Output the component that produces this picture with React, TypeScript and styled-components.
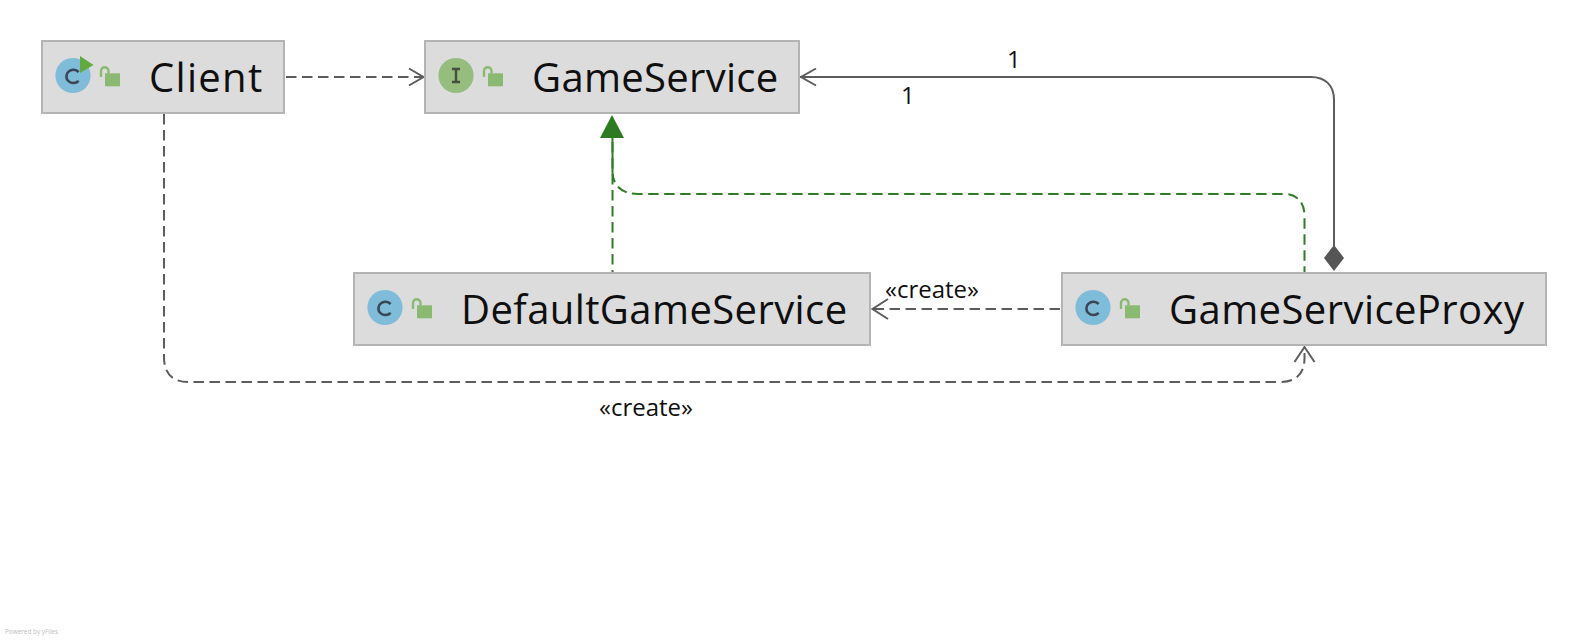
import React from 'react';
import styled, { createGlobalStyle } from 'styled-components';

const GlobalStyle = createGlobalStyle`
  html, body {
    margin: 0;
    padding: 0;
    background: #ffffff;
  }
`;

type Kind = 'class' | 'interface' | 'main';

interface INode {
  name: string;
  kind: Kind;
  x: number;
  y: number;
  w: number;
  track: number;
}

const nodes: INode[] = [
  { name: 'Client', kind: 'main', x: 41, y: 40, w: 244, track: 1.3 },
  { name: 'GameService', kind: 'interface', x: 424, y: 40, w: 376, track: 0.3 },
  { name: 'DefaultGameService', kind: 'class', x: 353, y: 272, w: 518, track: 0.4 },
  { name: 'GameServiceProxy', kind: 'class', x: 1061, y: 272, w: 486, track: 0.42 },
];

const labels = [
  { text: '1', x: 1007, y: 44 },
  { text: '1', x: 901, y: 80 },
  { text: '«create»', x: 885, y: 274 },
  { text: '«create»', x: 599, y: 392 },
];

const NodeIcon = ({ kind }: { kind: Kind }) => (
  <IconSvg width="66" height="40" viewBox="0 0 66 40">
    <circle cx="18" cy="18.5" r="17.6" fill={kind === 'interface' ? '#95bd7e' : '#7fbcd9'} />
    {kind === 'interface' ? (
      <path
        d="M14 12h8M14 25h8M18 12v13"
        fill="none"
        stroke="#45503f"
        strokeWidth="2.4"
      />
    ) : (
      <path
        d="M23.6 15a7 6.6 0 1 0 0 8.8"
        fill="none"
        stroke="#3a4654"
        strokeWidth="2.6"
      />
    )}
    {kind === 'main' && <path d="M25 -1L38.5 8L25 16Z" fill="#62a93f" />}
    <path
      d="M46 20v-6a3.75 3.75 0 0 1 7.5 0v2.5"
      fill="none"
      stroke="#8aba72"
      strokeWidth="2.4"
    />
    <rect x="50" y="16.3" width="15" height="13" fill="#8aba72" />
  </IconSvg>
);

const Edges = () => (
  <EdgeSvg width="1588" height="640" viewBox="0 0 1588 640">
    <g fill="none" stroke="#5c5c5c" strokeWidth="2">
      <path d="M286 77H423" strokeDasharray="10.5 5.5" />
      <path d="M409 68.5L423.5 77L409 85.5" />
      <path d="M800 77H1311C1325 77 1334 85 1334 100V246" />
      <path d="M816 68.5L801 77L816 85.5" />
      <path d="M1060 309H873" strokeDasharray="10.5 5.5" />
      <path d="M888 299L872.5 309L888 319" />
      <path
        d="M164 114V357C164 373 172 382 188 382H1280C1296 382 1304.5 374 1304.5 358V348"
        strokeDasharray="10.5 5.5"
      />
      <path d="M1294.5 362L1304.5 347L1314.5 362" />
    </g>
    <path d="M1334 245L1344 258L1334 271L1324 258Z" fill="#555555" />
    <g fill="none" stroke="#2f7d24" strokeWidth="2">
      <path d="M612.5 138V272" strokeDasharray="10.5 5.5" strokeDashoffset="12" />
      <path d="M612.5 138V172" />
      <path
        d="M612.5 172C613 186 622 194 638 194H1284C1297 194 1304.5 202 1304.5 216V272"
        strokeDasharray="10.5 5.5"
      />
    </g>
    <path d="M612 115L624 138H600Z" fill="#2d7a20" />
  </EdgeSvg>
);

const App = () => (
  <Stage>
    <GlobalStyle />
    <Edges />
    {nodes.map((n) => (
      <ClassNode key={n.name} $x={n.x} $y={n.y} $w={n.w}>
        <NodeIcon kind={n.kind} />
        <NodeName $track={n.track}>{n.name}</NodeName>
      </ClassNode>
    ))}
    {labels.map((l) => (
      <EdgeLabel key={`${l.text}-${l.x}`} $x={l.x} $y={l.y}>
        {l.text}
      </EdgeLabel>
    ))}
    <Watermark>Powered by yFiles</Watermark>
  </Stage>
);

const Stage = styled.div`
  position: relative;
  width: 1588px;
  height: 640px;
  overflow: hidden;
  background: #ffffff;
  font-family: 'Open Sans', 'Noto Sans', 'Liberation Sans', sans-serif;
`;

const EdgeSvg = styled.svg`
  position: absolute;
  top: 0;
  left: 0;
`;

const ClassNode = styled.div<{ $x: number; $y: number; $w: number }>`
  position: absolute;
  left: ${(p) => p.$x}px;
  top: ${(p) => p.$y}px;
  width: ${(p) => p.$w}px;
  height: 74px;
  box-sizing: border-box;
  display: flex;
  align-items: center;
  padding-left: 12px;
  background: #dcdcdc;
  border: 2px solid #b4b4b4;
`;

const IconSvg = styled.svg`
  flex: none;
  margin-right: 28px;
  overflow: visible;
`;

const NodeName = styled.span<{ $track: number }>`
  font-size: 40px;
  line-height: 46px;
  letter-spacing: ${(p) => p.$track}px;
  color: #0f0f0f;
  white-space: nowrap;
`;

const EdgeLabel = styled.div<{ $x: number; $y: number }>`
  position: absolute;
  left: ${(p) => p.$x}px;
  top: ${(p) => p.$y}px;
  font-size: 24px;
  line-height: 30px;
  color: #0f0f0f;
  white-space: nowrap;
`;

const Watermark = styled.div`
  position: absolute;
  left: 5px;
  bottom: 4px;
  font-size: 6.4px;
  line-height: 9px;
  color: #bdbdbd;
`;

export default App;
